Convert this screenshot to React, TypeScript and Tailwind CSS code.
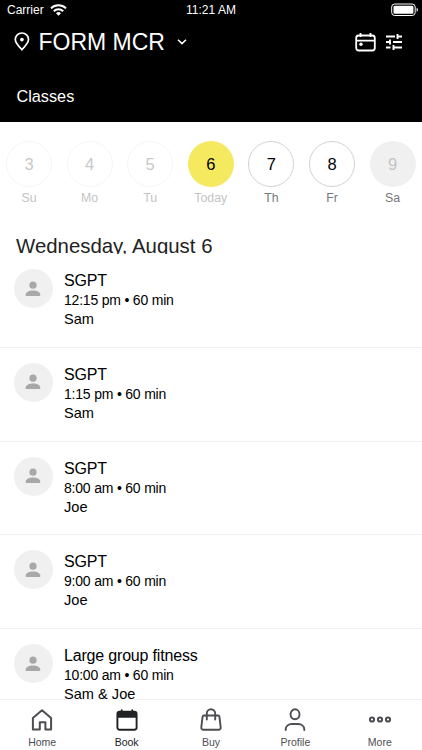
import React from 'react';

interface Day {
  num: string;
  label: string;
  circle: string;
  text: string;
}

interface ClassItem {
  id: number;
  title: string;
  time: string;
  coach: string;
}

const days: Day[] = [
  { num: '3', label: 'Su', circle: 'border border-[#f5f5f5] text-[#c8c8c8]', text: 'text-[#c4c4c4]' },
  { num: '4', label: 'Mo', circle: 'border border-[#f5f5f5] text-[#c8c8c8]', text: 'text-[#c4c4c4]' },
  { num: '5', label: 'Tu', circle: 'border border-[#f5f5f5] text-[#c8c8c8]', text: 'text-[#c4c4c4]' },
  { num: '6', label: 'Today', circle: 'bg-[#f5e960] text-black', text: 'text-[#c4c4c4]' },
  { num: '7', label: 'Th', circle: 'border border-[#d2d2d2] text-black', text: 'text-[#777777]' },
  { num: '8', label: 'Fr', circle: 'border border-[#d2d2d2] text-black', text: 'text-[#777777]' },
  { num: '9', label: 'Sa', circle: 'bg-[#f0f0f0] text-[#c4c4c4]', text: 'text-[#777777]' },
];

const classes: ClassItem[] = [
  { id: 1, title: 'SGPT', time: '12:15 pm • 60 min', coach: 'Sam' },
  { id: 2, title: 'SGPT', time: '1:15 pm • 60 min', coach: 'Sam' },
  { id: 3, title: 'SGPT', time: '8:00 am • 60 min', coach: 'Joe' },
  { id: 4, title: 'SGPT', time: '9:00 am • 60 min', coach: 'Joe' },
  { id: 5, title: 'Large group fitness', time: '10:00 am • 60 min', coach: 'Sam & Joe' },
];

const StatusBar = () => (
  <div className="grid h-5 grid-cols-3 items-center pl-[7px] pr-[3px] text-[12px] leading-5">
    <div className="flex items-center gap-[6px]">
      <span>Carrier</span>
      <svg width="17" height="12" viewBox="0 0 17 12" fill="none" stroke="white" strokeWidth="2">
        <path d="M1 4.4a10.8 10.8 0 0 1 15 0" />
        <path d="M3.8 7.2a6.8 6.8 0 0 1 9.4 0" />
        <path d="M8.5 11.8 6 9.3a3.6 3.6 0 0 1 5 0z" fill="white" stroke="none" />
      </svg>
    </div>
    <span className="pr-[4px] text-center">11:21 AM</span>
    <svg className="justify-self-end" width="28" height="14" viewBox="0 0 28 14">
      <rect x="0.700" y="1" width="23.500" height="11.500" rx="3" fill="none" stroke="white" />
      <rect x="2.500" y="2.800" width="19.900" height="7.900" rx="1.200" fill="white" />
      <path d="M25.600 4.700c1.700.500 1.700 3.600 0 4.100z" fill="white" />
    </svg>
  </div>
);

const Avatar = () => (
  <div className="flex size-[39px] shrink-0 items-center justify-center rounded-full bg-[#f0f0f0]">
    <svg width="16" height="16" viewBox="0 0 16 16" fill="#a8a8a8">
      <circle cx="8" cy="4.200" r="3.600" />
      <path d="M.7 15v-1.300c0-2.600 3.800-4.100 7.300-4.100s7.300 1.500 7.300 4.100v.3a1 1 0 0 1-1 1z" />
    </svg>
  </div>
);

const HomeIcon = () => (
  <svg width="22" height="24" viewBox="0 0 22 24" fill="none" stroke="#4d4d52" strokeWidth="2" strokeLinejoin="round">
    <path d="M1.900 9.900 11 2.200l9.100 7.700v11.600h-5.700v-7.300H8.800v7.300H1.900z" />
  </svg>
);

const BookIcon = () => (
  <svg width="22" height="24" viewBox="0 0 22 24" fill="none" stroke="#222226" strokeWidth="1.900" strokeLinecap="round">
    <rect x="1.400" y="3.800" width="19.200" height="18" rx="2.200" />
    <path d="M1.400 5.800a2 2 0 0 1 2-2h15.200a2 2 0 0 1 2 2v4H1.400z" fill="#222226" stroke="none" />
    <path d="M5.700 2.300v2M16.300 2.300v2" />
  </svg>
);

const BuyIcon = () => (
  <svg width="22" height="24" viewBox="0 0 22 24" fill="none" stroke="#4d4d52" strokeWidth="1.900" strokeLinecap="round" strokeLinejoin="round">
    <path d="M3.900 7.500h14.200a1.300 1.300 0 0 1 1.300 1.100l1.300 10.700a2.200 2.200 0 0 1-2.200 2.500h-15a2.200 2.200 0 0 1-2.200-2.500L2.600 8.600A1.300 1.300 0 0 1 3.900 7.500z" />
    <path d="M6.800 11.500V5.400a4.200 4.200 0 0 1 8.400 0v6.100" />
  </svg>
);

const ProfileIcon = () => (
  <svg width="22" height="24" viewBox="0 0 22 24" fill="none" stroke="#4d4d52" strokeWidth="1.900" strokeLinecap="round">
    <ellipse cx="11" cy="6.300" rx="4.500" ry="5" />
    <path d="M1.700 22v-.500c0-3.600 3-5.500 6.200-5.500h6.200c3.200 0 6.200 1.900 6.200 5.500v.500" />
  </svg>
);

const MoreIcon = () => (
  <svg width="24" height="24" viewBox="0 0 24 24" fill="none" stroke="#4d4d52" strokeWidth="2">
    <circle cx="4" cy="11.500" r="2.100" />
    <circle cx="12" cy="11.500" r="2.100" />
    <circle cx="20" cy="11.500" r="2.100" />
  </svg>
);

const tabs = [
  { label: 'Home', icon: <HomeIcon />, color: 'text-[#4d4d52]' },
  { label: 'Book', icon: <BookIcon />, color: 'text-[#222226]' },
  { label: 'Buy', icon: <BuyIcon />, color: 'text-[#4d4d52]' },
  { label: 'Profile', icon: <ProfileIcon />, color: 'text-[#4d4d52]' },
  { label: 'More', icon: <MoreIcon />, color: 'text-[#4d4d52]' },
];

const App: React.FC = () => {
  return (
    <div className="flex h-[750px] w-[422px] flex-col overflow-hidden bg-white font-['Liberation_Sans',Arial,sans-serif] text-black">
      {/* Header */}
      <header className="h-[122px] shrink-0 bg-black text-white">
        <StatusBar />
        <div className="flex h-[44px] items-center pl-[14px] pr-[19px]">
          <svg width="16" height="20" viewBox="0 0 16 20" fill="none" stroke="white" strokeWidth="1.700">
            <path d="M7.900 17.700C5 14.800 1.300 11 1.300 7.600a6.600 6.600 0 0 1 13.200 0c0 3.400-3.700 7.200-6.600 10.100z" />
            <circle cx="7.900" cy="7.600" r="1.900" fill="white" stroke="none" />
          </svg>
          <h1 className="ml-[8.500px] text-[23px]">FORM MCR</h1>
          <svg className="ml-[12.500px]" width="10" height="6" viewBox="0 0 10 6" fill="none" stroke="white" strokeWidth="1.500">
            <path d="M1 .8 5 4.600 9 .8" />
          </svg>
          <div className="ml-auto flex items-center gap-[9px]">
            <svg width="21" height="20" viewBox="0 0 21 20" fill="none" stroke="white" strokeWidth="1.800">
              <rect x="1.200" y="3.500" width="18.600" height="15" rx="2.500" />
              <path d="M1.200 8.700h18.600M5.500 1v4M15.500 1v4" />
              <circle cx="6" cy="12.300" r="1.700" fill="white" stroke="none" />
            </svg>
            <svg width="18" height="18" viewBox="0 0 18 18" fill="none" stroke="white" strokeWidth="1.900">
              <path d="M1 3.500h9M12.500 3.500H17M12.500 1v5M1 9h4M5 6.500v5M8 9h9M1 14.500h4.500M8.500 14.500H17M8.500 12v5" />
            </svg>
          </div>
        </div>
        <p className="pl-[16.400px] pt-[20px] text-[16.300px] leading-6">Classes</p>
      </header>

      {/* Day picker */}
      <div className="-mr-1 flex h-[112px] shrink-0 pt-[19px]">
        {days.map((day) => (
          <div key={day.num} className="-ml-[1.300px] mr-[1.300px] flex w-[60.600px] shrink-0 flex-col items-center">
            <div className={`flex size-[46px] items-center justify-center rounded-full pt-[1px] text-[16.500px] ${day.circle}`}>
              {day.num}
            </div>
            <span className={`mt-[3px] text-[12.300px] leading-4 ${day.text}`}>{day.label}</span>
          </div>
        ))}
      </div>

      <h2 className="h-[20px] shrink-0 overflow-hidden pl-[16px] text-[20.400px] leading-6 text-[#222222]">
        Wednesday, August 6
      </h2>

      {/* Class list */}
      <main className="min-h-0 flex-1 overflow-hidden">
        {classes.map((item) => (
          <div key={item.id} className="flex h-[93.750px] border-b border-[#f3f3f3] pl-[13.500px] pt-[15px]">
            <Avatar />
            <div className="ml-[11.500px]">
              <h3 className="text-[16px] leading-[23px] tracking-[-0.180px]">{item.title}</h3>
              <p className="text-[14px] leading-[17px] tracking-[-0.200px]">{item.time}</p>
              <p className="text-[14.600px] leading-[20px]">{item.coach}</p>
            </div>
          </div>
        ))}
      </main>

      {/* Tab bar */}
      <nav className="grid h-[51px] shrink-0 grid-cols-5 border-t border-[#f3f3f3] bg-white">
        {tabs.map((tab) => (
          <div key={tab.label} className={`flex flex-col items-center pt-[8px] ${tab.color}`}>
            {tab.icon}
            <span className="mt-[4px] text-[10.500px] leading-3">{tab.label}</span>
          </div>
        ))}
      </nav>
    </div>
  );
};

export default App;
